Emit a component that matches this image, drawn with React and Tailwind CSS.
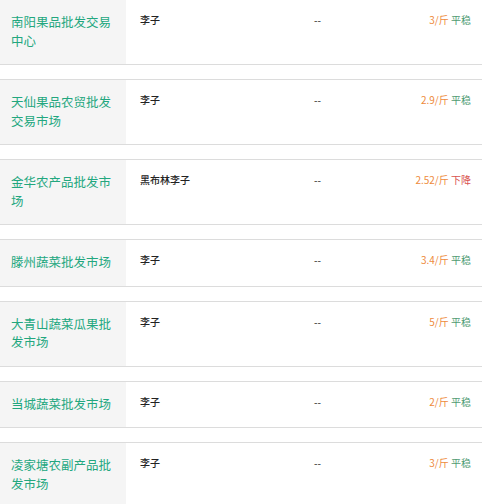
import React from 'react';

const rows = [
  { market: "南阳果品批发交易中心", name: "李子", price: "3", trend: "平稳" },
  { market: "天仙果品农贸批发交易市场", name: "李子", price: "2.9", trend: "平稳" },
  { market: "金华农产品批发市场", name: "黑布林李子", price: "2.52", trend: "下降" },
  { market: "滕州蔬菜批发市场", name: "李子", price: "3.4", trend: "平稳" },
  { market: "大青山蔬菜瓜果批发市场", name: "李子", price: "5", trend: "平稳" },
  { market: "当城蔬菜批发市场", name: "李子", price: "2", trend: "平稳" },
  { market: "凌家塘农副产品批发市场", name: "李子", price: "3", trend: "平稳" },
];

export default function App() {
  return (
    <div
      className="w-[482px] h-[504px] overflow-hidden bg-white"
      style={{ fontFamily: '"Microsoft YaHei", "Noto Sans CJK SC", "Noto Sans", sans-serif' }}
    >
      <div className="flex flex-col gap-[14px]">
        {rows.map((row, i) => (
          <div key={i} className="flex border-y border-[#dcdcdc] first:border-t-0 bg-white">
            {/* market name */}
            <div className="w-[126px] shrink-0 bg-[#f5f5f5] pl-[11px] pr-[8px] pt-[13px] pb-[14px] flex items-center">
              <span className="text-[12.5px] leading-[18.5px] text-[#22a77e]">{row.market}</span>
            </div>

            {/* product */}
            <div className="w-[176px] shrink-0 pl-[14px] pt-[13px] text-[10px] leading-[14px] font-medium text-[#222]">
              {row.name}
            </div>

            {/* spec */}
            <div className="w-[80px] shrink-0 pl-[12px] pt-[13px] text-[10px] leading-[14px] text-[#222]">
              --
            </div>

            {/* price + trend */}
            <div className="flex-1 pr-[11px] pt-[13px] text-right text-[10px] leading-[14px]">
              <span className="text-[#ee8a3c]">{row.price}/斤</span>{" "}
              <span className={row.trend === "下降" ? "text-[#d9534f]" : "text-[#4f9b72]"}>{row.trend}</span>
            </div>
          </div>
        ))}
      </div>
    </div>
  );
}
